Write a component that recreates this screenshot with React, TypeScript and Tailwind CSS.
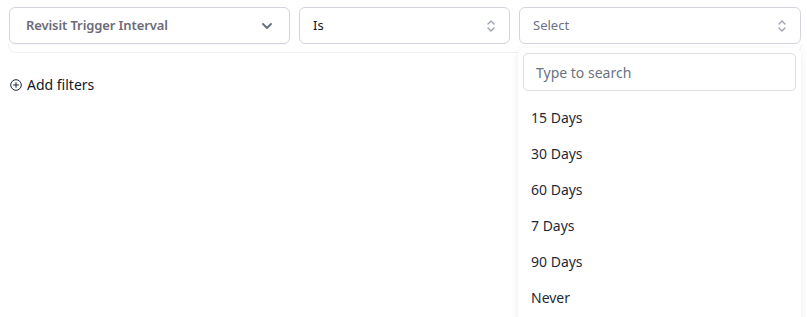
import React from "react";

const UpDown = () => (
  <svg width="10" height="14" viewBox="0 0 10 14" fill="none" stroke="#9ca3af" strokeWidth="1.4" strokeLinecap="round" strokeLinejoin="round">
    <path d="M2 5 L5 2 L8 5" />
    <path d="M2 9 L5 12 L8 9" />
  </svg>
);

export default function App() {
  const items = ["15 Days", "30 Days", "60 Days", "7 Days", "90 Days", "Never"];
  return (
    <div className="relative w-[807px] h-[317px] bg-white overflow-hidden" style={{ fontFamily: '"Noto Sans", "Open Sans", sans-serif' }}>
      <div className="pt-[7px] pl-[9px]">
        <div className="flex gap-[9px]">
          <div className="w-[281px] h-[37px] rounded-[6px] border border-[#d4d4dc] flex items-center justify-between pl-[16px] pr-[16px] shadow-[0_1px_1px_rgba(0,0,0,0.03)]">
            <span className="text-[13px] font-semibold text-[#6b6b76] tracking-[-0.1px]">Revisit Trigger Interval</span>
            <svg width="12" height="8" viewBox="0 0 12 8" fill="none" stroke="#6b7280" strokeWidth="2" strokeLinecap="round" strokeLinejoin="round">
              <path d="M2 2 L6 6 L10 2" />
            </svg>
          </div>
          <div className="w-[211px] h-[37px] rounded-[6px] border border-[#d4d4dc] flex items-center justify-between pl-[13px] pr-[13px]">
            <span className="text-[13px] text-[#111827]">Is</span>
            <UpDown />
          </div>
          <div className="w-[282px] h-[37px] rounded-[6px] border border-[#d4d4dc] flex items-center justify-between pl-[13px] pr-[13px]">
            <span className="text-[13px] text-[#6b7280]">Select</span>
            <UpDown />
          </div>
        </div>
        <div className="w-[794px] h-[9px] -ml-[1px] rounded-b-[8px] border border-t-0 border-[#f1f1f3]" />
      </div>
      <div className="flex items-center gap-[5px] pl-[10px] mt-[21px]">
        <svg width="12" height="12" viewBox="0 0 12 12" fill="none" stroke="#1f2937" strokeWidth="1">
          <circle cx="6" cy="6" r="5.3" />
          <path d="M6 3.2 V8.8 M3.2 6 H8.8" />
        </svg>
        <span className="text-[14px] text-[#111827]">Add filters</span>
      </div>

      <div className="absolute left-[518px] top-[48px] w-[283px] h-[290px] bg-white rounded-[6px] shadow-[0_2px_8px_rgba(0,0,0,0.08)] px-[5px] pt-[5px]">
        <div className="h-[38px] rounded-[5px] border border-[#dcdce2] flex items-center pl-[12px]">
          <span className="text-[14px] text-[#6b7280]">Type to search</span>
        </div>
        <div className="flex flex-col pt-[8px]">
          {items.map((it) => (
            <div key={it} className="h-[36px] flex items-center pl-[8px] text-[14px] text-[#1f2937]">
              {it}
            </div>
          ))}
        </div>
      </div>
    </div>
  );
}
